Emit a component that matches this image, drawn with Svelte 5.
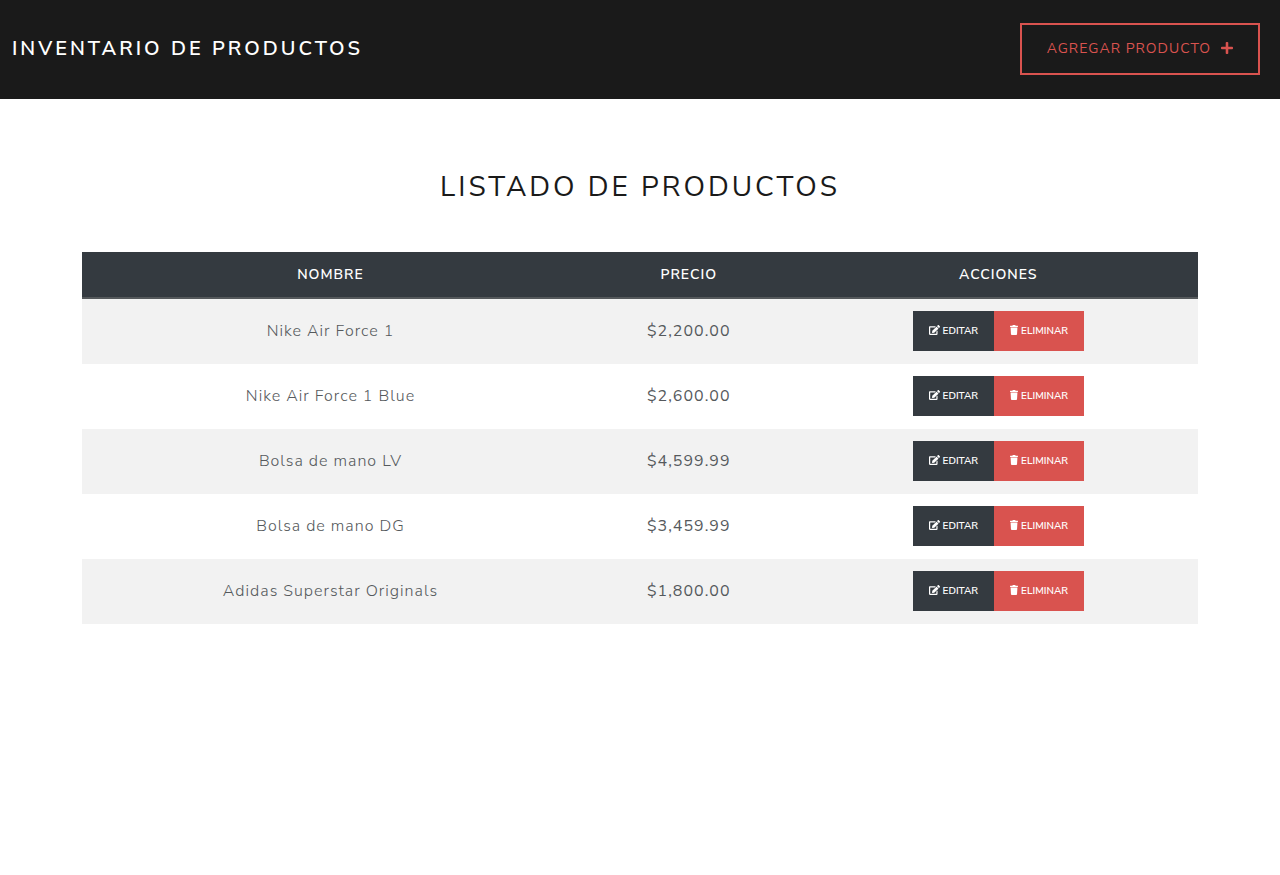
<script>
  const products = [
    { name: 'Nike Air Force 1', price: 2200 },
    { name: 'Nike Air Force 1 Blue', price: 2600 },
    { name: 'Bolsa de mano LV', price: 4599.99 },
    { name: 'Bolsa de mano DG', price: 3459.99 },
    { name: 'Adidas Superstar Originals', price: 1800 },
  ];

  const money = new Intl.NumberFormat('en-US', { style: 'currency', currency: 'USD' });
</script>

<header class="navbar">
  <a class="brand" href="#inicio">Inventario de productos</a>
  <a class="add" href="#nuevo">
    Agregar producto
    <svg class="plus" viewBox="0 0 448 448" aria-hidden="true">
      <path d="M416 176H272V32c0-17.670-14.330-32-32-32h-32c-17.670 0-32 14.330-32 32v144H32c-17.670 0-32 14.330-32 32v32c0 17.670 14.330 32 32 32h144v144c0 17.670 14.330 32 32 32h32c17.670 0 32-14.330 32-32V272h144c17.670 0 32-14.330 32-32v-32c0-17.670-14.330-32-32-32z" />
    </svg>
  </a>
</header>

<main class="container">
  <h1>Listado de productos</h1>

  <table>
    <thead>
      <tr>
        <th scope="col">Nombre</th>
        <th scope="col">Precio</th>
        <th scope="col">Acciones</th>
      </tr>
    </thead>
    <tbody>
      {#each products as product (product.name)}
        <tr>
          <td class="name">{product.name}</td>
          <td>{money.format(product.price)}</td>
          <td>
            <div class="buttons">
              <button class="edit" type="button">
                <svg class="pencil" viewBox="0 0 576 512" aria-hidden="true">
                  <path d="M402.600 83.200l90.200 90.200c3.800 3.800 3.800 10 0 13.800L274.400 405.600l-92.800 10.300c-12.400 1.400-22.900-9.100-21.500-21.500l10.300-92.800L388.800 83.200c3.800-3.800 10-3.800 13.800 0zm162-22.900l-48.800-48.800c-15.200-15.200-39.900-15.200-55.200 0l-35.400 35.400c-3.800 3.800-3.800 10 0 13.800l90.200 90.200c3.800 3.800 10 3.800 13.800 0l35.400-35.400c15.200-15.300 15.200-40 0-55.200zM384 346.200V448H64V128h229.800c3.200 0 6.200-1.300 8.500-3.500l40-40c7.600-7.600 2.200-20.500-8.500-20.500H48C21.500 64 0 85.500 0 112v352c0 26.500 21.500 48 48 48h352c26.500 0 48-21.500 48-48V306.200c0-10.700-12.900-16-20.500-8.500l-40 40c-2.200 2.300-3.500 5.300-3.500 8.500z" />
                </svg>
                Editar
              </button>
              <button class="remove" type="button">
                <svg class="trash" viewBox="0 0 448 512" preserveAspectRatio="none" aria-hidden="true">
                  <path d="M432 32H312l-9.400-18.700A24 24 0 0 0 281.100 0H166.800a23.720 23.720 0 0 0-21.400 13.300L136 32H16A16 16 0 0 0 0 48v32a16 16 0 0 0 16 16h416a16 16 0 0 0 16-16V48a16 16 0 0 0-16-16zM53.200 467a48 48 0 0 0 47.900 45h245.800a48 48 0 0 0 47.900-45L416 128H32z" />
                </svg>
                Eliminar
              </button>
            </div>
          </td>
        </tr>
      {/each}
    </tbody>
  </table>
</main>

<style>
  :global(body) {
    margin: 0;
    background: #fff;
    color: #55595c;
    font-family: 'Nunito Sans', 'Open Sans', sans-serif;
    font-size: 16px;
    line-height: 24px;
  }

  svg {
    fill: currentColor;
    flex: none;
    margin-bottom: 2px;
  }

  .navbar {
    display: flex;
    align-items: center;
    justify-content: space-between;
    padding: 23px 20px 24px 12px;
    background: #1a1a1a;
    text-transform: uppercase;
  }

  .brand {
    color: #fff;
    font-size: 20px;
    font-weight: 600;
    letter-spacing: 3px;
    text-decoration: none;
  }

  .add {
    display: flex;
    align-items: center;
    gap: 10px;
    padding: 12px 25px;
    border: 2px solid #d9534f;
    color: #d9534f;
    font-size: 14px;
    letter-spacing: 1px;
    text-decoration: none;
  }

  .plus {
    width: 12px;
    height: 12px;
  }

  .container {
    max-width: 1116px;
    margin: 0 auto;
    padding: 71px 12px 48px;
  }

  h1 {
    margin: 0 0 48px;
    color: #1a1a1a;
    font-size: 28px;
    font-weight: 400;
    line-height: 34px;
    letter-spacing: 3px;
    text-align: center;
    text-transform: uppercase;
  }

  table {
    width: 100%;
    border-collapse: collapse;
    text-align: center;
    letter-spacing: 1px;
  }

  th {
    padding: 12px;
    border-bottom: 2px solid #55595c;
    background: #343a40;
    color: #fff;
    font-size: 14px;
    font-weight: 600;
    line-height: 21px;
    text-transform: uppercase;
  }

  td {
    padding: 12px 12px 13px;
    vertical-align: middle;
  }

  td.name {
    padding-left: 14px;
    padding-right: 14px;
    font-weight: 300;
  }

  tbody tr:nth-child(odd) {
    background: #f2f2f2;
  }

  .buttons {
    display: inline-flex;
    vertical-align: middle;
  }

  button {
    display: flex;
    align-items: center;
    gap: 3px;
    height: 40px;
    padding: 0 16px;
    border: 0;
    color: #fff;
    font-family: inherit;
    font-size: 10px;
    font-weight: 600;
    text-transform: uppercase;
    cursor: pointer;
  }

  .edit {
    background: #343a40;
  }

  .remove {
    background: #d9534f;
  }

  .pencil {
    width: 11px;
    height: 10px;
  }

  .trash {
    width: 8px;
    height: 10px;
  }
</style>
